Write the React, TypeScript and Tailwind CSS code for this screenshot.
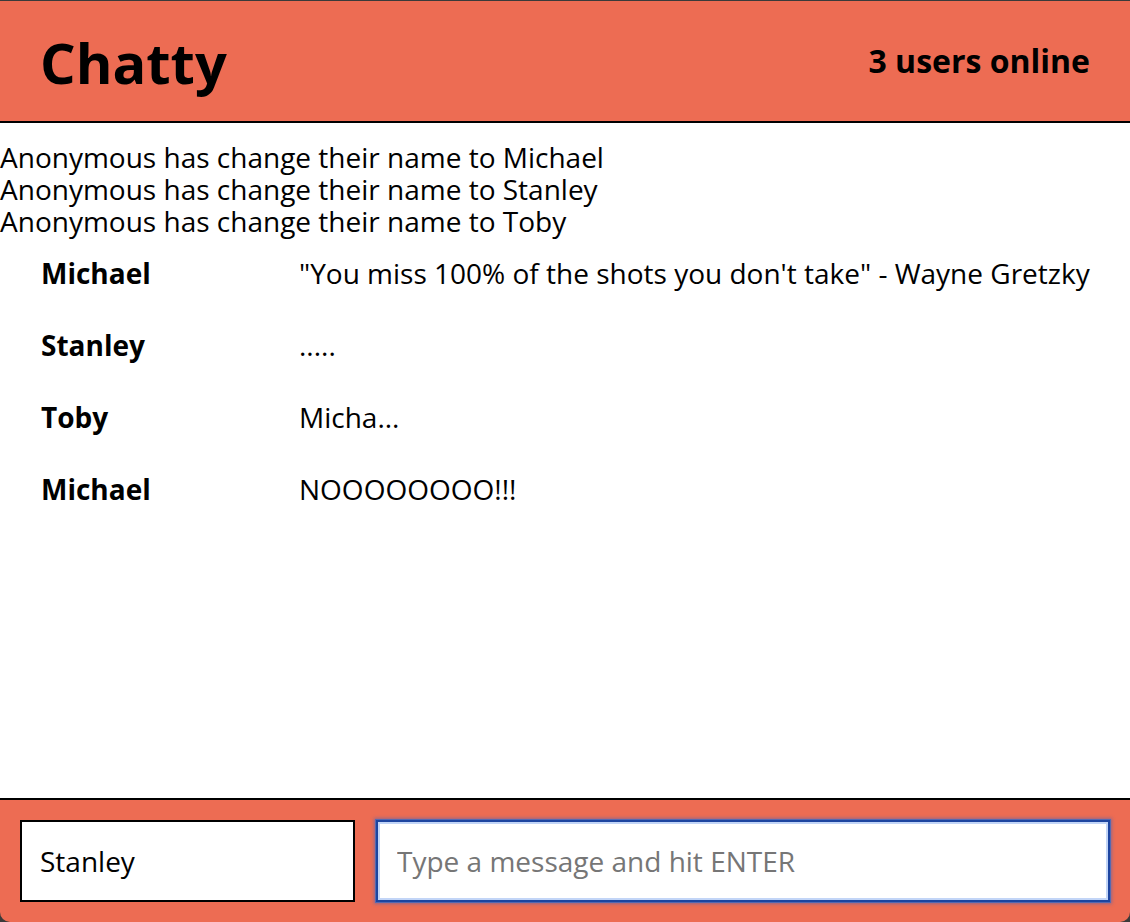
const notifications = [
  "Anonymous has change their name to Michael",
  "Anonymous has change their name to Stanley",
  "Anonymous has change their name to Toby",
];

const messages = [
  { user: "Michael", text: "\"You miss 100% of the shots you don't take\" - Wayne Gretzky" },
  { user: "Stanley", text: "....." },
  { user: "Toby", text: "Micha..." },
  { user: "Michael", text: "NOOOOOOOO!!!" },
];

export default function App() {
  return (
    <div className="h-[922px] flex flex-col bg-[#3a3a3a] pt-px font-['Open_Sans',sans-serif] text-black">
      <nav
        className="
          h-[122px]
          flex
          items-center
          justify-between
          px-[40px]
          bg-[#ED6C53]
          border-b-2
          border-black
        "
      >
        <h1 className="text-[56px] font-bold leading-none pt-[2px]">Chatty</h1>
        <span className="text-[32px] font-bold leading-none">3 users online</span>
      </nav>

      <main className="flex-1 bg-white pt-[18px]">
        <div className="text-[28px]">
          {notifications.map((n, i) => (
            <div key={i} className="leading-[32px]">{n}</div>
          ))}
        </div>
        <div className="text-[28px]">
          {messages.map((m, i) => (
            <div key={i} className="flex py-5 pl-[41px] leading-[32px]">
              <span className="w-[258px] shrink-0 font-bold">{m.user}</span>
              <span>{m.text}</span>
            </div>
          ))}
        </div>
      </main>

      <footer
        className="
          h-[124px]
          flex
          items-center
          gap-[21px]
          px-[20px]
          bg-[#ED6C53]
          border-t-2
          border-black
          rounded-b-[10px]
        "
      >
        <input
          defaultValue="Stanley"
          className="w-[335px] h-[82px] px-[18px] bg-white border-2 border-black text-[28px] outline-none"
        />
        <input
          placeholder="Type a message and hit ENTER"
          className="
            flex-1
            h-[82px]
            px-[19px]
            bg-white
            border-2
            border-[#1d45a0]
            text-[28px]
            outline-none
            placeholder:text-[#767676]
            shadow-[inset_0_0_0_2px_#c2d5f7,0_0_0_1px_#5668b0,0_0_3px_2px_rgba(90,100,170,0.6)]
          "
        />
      </footer>
    </div>
  );
}
